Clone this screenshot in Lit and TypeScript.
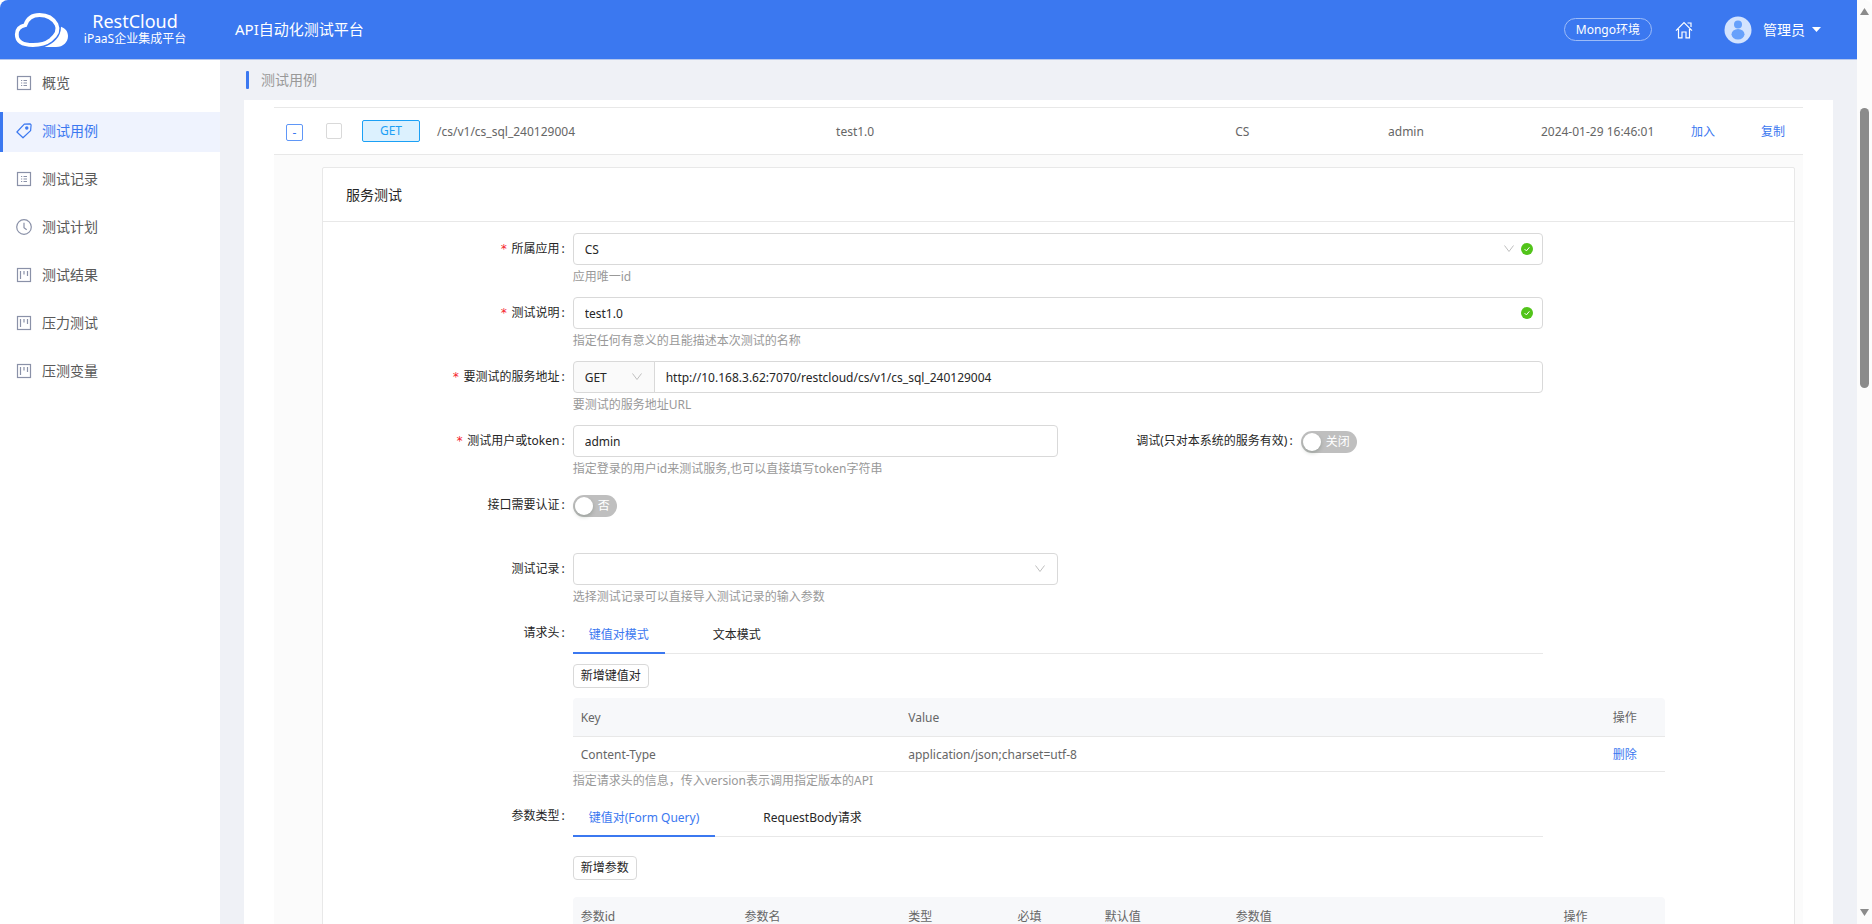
import { LitElement, html, css, svg } from "lit";
import { customElement, property, state } from "lit/decorators.js";
import { classMap } from "lit/directives/class-map.js";

const base = css`
  *, *::before, *::after { box-sizing: border-box; }
  button, input, select { font: inherit; color: inherit; margin: 0; }
  a { color: #3b78f0; text-decoration: none; }
  button { cursor: pointer; }
`;

const shapes: Record<string, unknown> = {
  list: svg`<rect x="1.5" y="1.5" width="13" height="13"/><path d="M5 5.5h1.200M5 8h1.200M5 10.500h1.200M7.500 5.500h3.500M7.500 8h3.500M7.500 10.500h3.500"/>`,
  tag: svg`<path d="M8.300 1.200L14.200.8l.9 1L14.600 7.600 7 14.800.9 9z" stroke-linejoin="round"/><circle cx="10.800" cy="5" r="1.100" fill="#3b78f0"/>`,
  clock: svg`<circle cx="8" cy="8" r="7.300"/><path d="M8 3.800v5l2.700 2"/>`,
  board: svg`<rect x="1.500" y="1.500" width="13" height="13"/><path d="M4.500 4v8M8 4v3.500M11.500 4v5"/>`,
};

@customElement("side-menu")
export class SideMenu extends LitElement {
  static styles = [base, css`
    :host { display: block; width: 220px; flex: none; background: #fff; padding-top: 4px; }
    .list { list-style: none; margin: 0; padding: 0; display: flex; flex-direction: column; gap: 8px; }
    .item { display: flex; align-items: center; gap: 10px; height: 40px; padding: 0 0 2px 13px; border-left: 3px solid transparent; font-size: 14px; color: #595959; }
    .active { color: #3b78f0; background: #eff3fe; border-left-color: #3b78f0; }
    .icon { width: 16px; height: 16px; flex: none; fill: none; stroke: #8a91a8; stroke-width: 1.2; }
    .active .icon { stroke: #3b78f0; }
  `];
  @state() private current = 1;
  private items = [
    ["list", "概览"], ["tag", "测试用例"], ["list", "测试记录"], ["clock", "测试计划"],
    ["board", "测试结果"], ["board", "压力测试"], ["board", "压测变量"],
  ];
  render() {
    return html`<nav><ul class="list">${this.items.map(([icon, text], i) => html`
      <li><a href="#" class=${classMap({ item: true, active: i === this.current })} @click=${() => (this.current = i)}>
        <svg class="icon" viewBox="0 0 16 16">${shapes[icon]}</svg><span>${text}</span></a></li>`)}</ul></nav>`;
  }
}

@customElement("tab-bar")
export class TabBar extends LitElement {
  static styles = [base, css`
    :host { display: block; }
    .bar { display: flex; gap: 32px; height: 39px; }
    .bar { background: linear-gradient(#e8e8e8, #e8e8e8) 0 38px / 100% 1px no-repeat; }
    .tab { border: 0; border-bottom: 2px solid transparent; background: none; padding: 2px 16px 0; font-size: 12px; color: #262626; }
    .on { color: #3b78f0; border-bottom-color: #3b78f0; }
  `];
  @property({ attribute: false }) tabs: string[] = [];
  @state() private current = 0;
  render() {
    return html`<div class="bar" role="tablist">${this.tabs.map((t, i) => html`
      <button role="tab" aria-selected=${i === this.current} class=${classMap({ tab: true, on: i === this.current })}
        @click=${() => (this.current = i)}>${t}</button>`)}</div>`;
  }
}

@customElement("app-root")
export class AppRoot extends LitElement {
  static styles = [base, css`
    :host { display: flex; height: 100vh; overflow: hidden; background: #fff; font: 12px/18px "Noto Sans", "Noto Sans CJK SC", sans-serif; color: #262626; }
    .page { flex: 1; min-width: 0; display: flex; flex-direction: column; }
    .top { flex: none; height: 60px; background: #3b78f0; border-bottom: 1px solid #b4c6ee; border-top-left-radius: 8px; color: #fff; display: flex; align-items: center; }
    .logo { width: 56px; height: 40px; margin-left: 14px; flex: none; }
    .brand { width: 130px; text-align: center; padding-bottom: 2px; }
    .brand-name { font-size: 18px; line-height: 20px; }
    .brand-sub { line-height: 16px; }
    .product { font-size: 15px; margin-left: 35px; padding-bottom: 2px; }
    .tools { margin-left: auto; display: flex; align-items: center; padding-right: 36px; }
    .env { height: 23px; padding: 0 11px; border: 1px solid #9dbcf8; border-radius: 12px; background: none; color: #fff; line-height: 18px; }
    .home { width: 18px; height: 18px; margin: 0 31px 0 23px; display: block; }
    .avatar { width: 28px; height: 28px; margin-right: 11px; }
    .user { display: flex; align-items: center; gap: 7px; font-size: 14px; border: 0; padding: 0; background: none; color: #fff; }
    .caret { width: 9px; height: 5px; }
    .body { flex: 1; min-height: 0; display: flex; }
    .main { flex: 1; min-width: 0; background: #eff1f6; padding: 0 24px; overflow: hidden; display: flex; flex-direction: column; }
    .crumb { flex: none; display: flex; align-items: center; gap: 12px; height: 40px; padding-left: 2px; font-size: 14px; font-weight: 400; color: #999; margin: 0; }
    .crumb::before { content: ""; width: 3px; height: 18px; background: #3b78f0; border-radius: 1px; }
    .sheet { flex: 1 0 auto; background: #fff; padding: 7px 30px 0; }

    .cases { width: 100%; table-layout: fixed; border-collapse: collapse; border-top: 1px solid #e8e8e8; color: #666; }
    .cases td { height: 47px; padding: 2px 0 0; border-bottom: 1px solid #e8e8e8; white-space: nowrap; }
    .cases .pad { padding-left: 8px; }
    .cases .toggle-cell { padding-left: 12px; }
    .cases .pick-cell { padding: 0 0 0 4px; }
    .cases .tag-cell { padding: 0 0 0 8px; }
    .c-toggle { width: 48px; } .c-pick { width: 32px; } .c-tag { width: 75px; }
    .c-name { width: 26.1%; } .c-app { width: 10%; } .c-join { width: 70px; } .c-copy { width: 50px; }
    .toggle { display: block; width: 17px; height: 17px; padding: 0; border: 1px solid #5f97f7; border-radius: 2px; background: #fff; color: #3b78f0; line-height: 13px; }
    .tick { display: block; appearance: none; width: 16px; height: 16px; border: 1px solid #d9d9d9; border-radius: 2px; background: #fff; }
    .method { display: block; width: 58px; height: 22px; border: 1px solid #1ba0f5; border-radius: 2px; background: #dcf1fe; color: #1ba0f5; text-align: center; line-height: 20px; }
    .expand { background: #fbfbfb; padding: 12px 8px 0 48px; }
    .card { background: #fff; border: 1px solid #e8e8e8; border-radius: 2px 2px 0 0; }
    .card-title { margin: 0; font-size: 14px; font-weight: 400; line-height: 22px; padding: 16px 23px 15px; border-bottom: 1px solid #e8e8e8; }

    .form { padding: 9px 8px 40px 7px; }
    .row { display: grid; grid-template-columns: minmax(0, 4fr) minmax(0, 16fr) minmax(0, 4fr); min-height: 64px; }
    .half { grid-template-columns: minmax(0, 4fr) minmax(0, 8fr) minmax(0, 4fr) minmax(0, 8fr); }
    .wide { grid-template-columns: minmax(0, 4fr) minmax(0, 16fr) minmax(0, 2fr) minmax(0, 2fr); }
    .span { grid-column: 2 / span 2; }
    .label { text-align: right; height: 36px; line-height: 36px; white-space: nowrap; }
    .label::after { content: ":"; margin: 0 8px 0 2px; }
    .req::before { content: "*"; color: #f5222d; margin-right: 4px; font-family: "DejaVu Sans Mono", monospace; }
    .ctl { padding-top: 2px; }
    .help { color: #999; margin: 0; padding-top: 3px; }
    .flush { padding-top: 0; }
    .box { position: relative; display: flex; }
    .field { width: 100%; height: 32px; border: 1px solid #d9d9d9; border-radius: 4px; padding: 1px 11px 0; background: #fff; outline: none; appearance: none; }
    .marks { position: absolute; right: 10px; top: 0; height: 32px; display: flex; align-items: center; gap: 7px; pointer-events: none; }
    .solo { right: 13px; }
    .chev { width: 10px; height: 8px; fill: none; stroke: #bfbfbf; }
    .ok { width: 12px; height: 12px; }
    .verb { position: relative; flex: none; width: 82px; margin-right: -1px; }
    .verb .field { background: #fafafa; border-radius: 4px 0 0 4px; }
    .url { border-radius: 0 4px 4px 0; }

    .switch { display: inline-flex; align-items: center; height: 22px; margin-top: 6px; padding: 0 7px 0 2px; gap: 5px; border: 0; border-radius: 11px; background: #bfbfbf; color: #fff; }
    .switch::before { content: ""; width: 18px; height: 18px; border-radius: 50%; background: #fff; box-shadow: 0 2px 4px rgba(0, 35, 11, 0.2); }

    .add { display: block; height: 24px; padding: 0 7px; border: 1px solid #d9d9d9; border-radius: 4px; background: #fff; line-height: 20px; margin: 10px 0; }
    .add-far { margin: 19px 0 17px; }
    .grid { width: 100%; table-layout: fixed; border-collapse: separate; border-spacing: 0; color: #666; }
    .grid th { height: 39px; padding: 2px 8px 0; font-weight: 400; text-align: left; background: #f7f8fa; border-bottom: 1px solid #e8e8e8; }
    .grid th:first-child { border-top-left-radius: 4px; }
    .grid th:last-child { border-top-right-radius: 4px; }
    .grid td { height: 35px; padding: 2px 8px 0; border-bottom: 1px solid #e8e8e8; }
    .tight { padding-bottom: 8px; }
    .w8 { width: 8%; } .w10 { width: 10%; } .w12 { width: 12%; } .w15 { width: 15%; } .w30 { width: 30%; } .w-op { width: 60px; }

    .rail { flex: none; width: 15px; background: #fcfcfc; border-top-right-radius: 8px; display: flex; flex-direction: column; align-items: center; padding: 8px 0; }
    .arrow { width: 9px; height: 7px; fill: #8b8b8b; flex: none; }
    .track { flex: 1; width: 9px; padding-top: 93px; }
    .thumb { height: 35%; border-radius: 5px; background: #8b8b8b; }
  `];

  private chev = html`<svg class="chev" viewBox="0 0 10 8"><path d="M.5 .5l4.5 6 4.5-6"/></svg>`;
  private ok = html`<svg class="ok" viewBox="0 0 12 12"><circle cx="6" cy="6" r="6" fill="#52c41a"/><path d="M3.6 6.1l1.8 1.8 3-3.6" fill="none" stroke="#fff"/></svg>`;

  private header() {
    return html`<header class="top">
      <svg class="logo" viewBox="0 0 56 40"><path d="M19 35C9 35 2.800 31.500 2.800 24.500c0-5 3.500-8.300 8.500-9.300C13.500 8 18.500 5 25.500 5c8 0 14 4 17 9.500 3 6-.5 11-6 15.500-4.500 3.500-9 5-17.500 5z" fill="none" stroke="#fff" stroke-width="3.800"/><path d="M47 16.800c4.500 1.500 7 5 7 9.200 0 6-4.500 11-12 11H30.500C40 33.500 47 27 47 16.800z" fill="#fff"/></svg>
      <div class="brand"><div class="brand-name">RestCloud</div><div class="brand-sub">iPaaS企业集成平台</div></div>
      <div class="product">API自动化测试平台</div>
      <div class="tools">
        <button class="env">Mongo环境</button>
        <a href="#" aria-label="主页"><svg class="home" viewBox="0 0 18 18" fill="none" stroke="#fff" stroke-width="1.200"><path d="M1 9.700L9 1.500l8 8.200M3.500 8v8.800H7V11h4v5.800h3.500V8M12.500 2h3.500v4"/></svg></a>
        <svg class="avatar" viewBox="0 0 28 28"><circle cx="14" cy="14" r="13.500" fill="#d3e3fe"/><circle cx="14" cy="8.600" r="4" fill="#66a0fb"/><ellipse cx="14" cy="18.300" rx="6.500" ry="5.200" fill="#66a0fb"/></svg>
        <button class="user">管理员<svg class="caret" viewBox="0 0 9 5"><path d="M0 0h9L4.500 5z" fill="#fff"/></svg></button>
      </div></header>`;
  }

  private form() {
    return html`<form class="form" @submit=${(e: Event) => e.preventDefault()}>
      <div class="row"><label class="label req" for="app">所属应用</label>
        <div class="ctl"><div class="box"><select class="field" id="app"><option>CS</option></select><span class="marks">${this.chev}${this.ok}</span></div><p class="help">应用唯一id</p></div></div>
      <div class="row"><label class="label req" for="desc">测试说明</label>
        <div class="ctl"><div class="box"><input class="field" id="desc" .value=${"test1.0"}><span class="marks">${this.ok}</span></div><p class="help">指定任何有意义的且能描述本次测试的名称</p></div></div>
      <div class="row"><label class="label req" for="url">要测试的服务地址</label>
        <div class="ctl"><div class="box"><span class="verb"><select class="field" aria-label="请求方法"><option>GET</option></select><span class="marks solo">${this.chev}</span></span><input class="field url" id="url" .value=${"http://10.168.3.62:7070/restcloud/cs/v1/cs_sql_240129004"}></div><p class="help">要测试的服务地址URL</p></div></div>
      <div class="row half"><label class="label req" for="user">测试用户或token</label>
        <div class="ctl"><div class="box"><input class="field" id="user" .value=${"admin"}></div><p class="help">指定登录的用户id来测试服务,也可以直接填写token字符串</p></div>
        <label class="label" for="debug">调试(只对本系统的服务有效)</label>
        <div class="ctl"><button class="switch" id="debug" type="button" role="switch" aria-checked="false">关闭</button></div></div>
      <div class="row"><label class="label" for="auth">接口需要认证</label>
        <div class="ctl"><button class="switch" id="auth" type="button" role="switch" aria-checked="false">否</button></div></div>
      <div class="row half"><label class="label" for="record">测试记录</label>
        <div class="ctl"><div class="box"><select class="field" id="record"><option></option></select><span class="marks solo">${this.chev}</span></div><p class="help">选择测试记录可以直接导入测试记录的输入参数</p></div></div>
      <div class="row wide"><span class="label">请求头</span><tab-bar .tabs=${["键值对模式", "文本模式"]}></tab-bar>
        <div class="span tight"><button type="button" class="add">新增键值对</button>
          <table class="grid"><thead><tr><th class="w30">Key</th><th>Value</th><th class="w-op">操作</th></tr></thead>
            <tbody><tr><td>Content-Type</td><td>application/json;charset=utf-8</td><td><a href="#">删除</a></td></tr></tbody></table>
          <p class="help flush">指定请求头的信息，传入version表示调用指定版本的API</p></div></div>
      <div class="row wide"><span class="label">参数类型</span><tab-bar .tabs=${["键值对(Form Query)", "RequestBody请求"]}></tab-bar>
        <div class="span"><button type="button" class="add add-far">新增参数</button>
          <table class="grid"><thead><tr><th class="w15">参数id</th><th class="w15">参数名</th><th class="w10">类型</th><th class="w8">必填</th><th class="w12">默认值</th><th class="w30">参数值</th><th>操作</th></tr></thead></table></div></div>
    </form>`;
  }

  render() {
    return html`<div class="page">${this.header()}
      <div class="body"><side-menu></side-menu>
        <main class="main"><h1 class="crumb">测试用例</h1>
          <div class="sheet">
            <table class="cases">
              <colgroup><col class="c-toggle"><col class="c-pick"><col class="c-tag"><col class="c-name"><col class="c-name"><col class="c-app"><col class="c-app"><col><col class="c-join"><col class="c-copy"></colgroup>
              <tbody><tr>
                <td class="toggle-cell"><button class="toggle" aria-label="收起">-</button></td>
                <td class="pick-cell"><input class="tick" type="checkbox" aria-label="选择"></td>
                <td class="tag-cell"><span class="method">GET</span></td>
                <td class="pad">/cs/v1/cs_sql_240129004</td><td class="pad">test1.0</td><td class="pad">CS</td><td class="pad">admin</td><td class="pad">2024-01-29 16:46:01</td>
                <td class="pad"><a href="#">加入</a></td><td class="pad"><a href="#">复制</a></td></tr></tbody></table>
            <div class="expand"><section class="card"><h2 class="card-title">服务测试</h2>${this.form()}</section></div>
          </div></main></div></div>
      <div class="rail" aria-hidden="true"><svg class="arrow" viewBox="0 0 9 7"><path d="M4.500 0L9 7H0z"/></svg><div class="track"><div class="thumb"></div></div><svg class="arrow" viewBox="0 0 9 7"><path d="M0 0h9L4.500 7z"/></svg></div>`;
  }
}
